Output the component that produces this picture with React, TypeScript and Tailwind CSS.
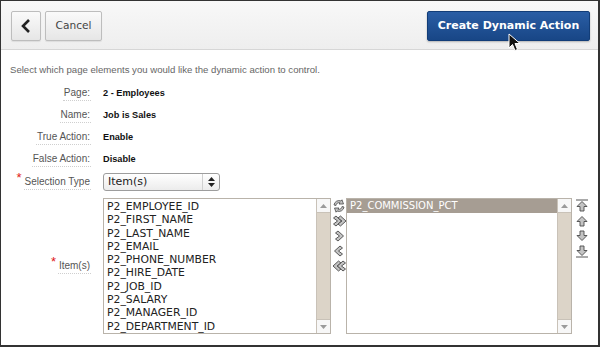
import React from 'react'

const leftItems = [
  'P2_EMPLOYEE_ID',
  'P2_FIRST_NAME',
  'P2_LAST_NAME',
  'P2_EMAIL',
  'P2_PHONE_NUMBER',
  'P2_HIRE_DATE',
  'P2_JOB_ID',
  'P2_SALARY',
  'P2_MANAGER_ID',
  'P2_DEPARTMENT_ID',
]

const details = [
  ['Page:', '2 - Employees'],
  ['Name:', 'Job is Sales'],
  ['True Action:', 'Enable'],
  ['False Action:', 'Disable'],
]

const Label = ({ children, required }: { children: React.ReactNode; required?: boolean }) => (
  <div className="w-[91px] shrink-0 flex justify-end pr-[1px]">
    <span className="relative border-b border-dotted border-[#cfcfcf] pb-[1px] px-[1px] text-[10px] leading-[13px] text-[#555]">
      {required && <span className="absolute -left-[7px] -top-[4px] text-[13px] text-[#e01818]">*</span>}
      {children}
    </span>
  </div>
)

const ScrollBar = () => (
  <div className="w-[14px] shrink-0 flex flex-col border-l border-[#c9c2b8] bg-[#dcd4c8]">
    <div className="h-[14px] bg-[#f7f7f7] border-b border-[#c9c2b8] flex items-center justify-center">
      <svg width="7" height="4" viewBox="0 0 7 4"><path d="M0 4 L3.5 0 L7 4 Z" fill="#9a9a9a" /></svg>
    </div>
    <div className="flex-1" />
    <div className="h-[14px] bg-[#f7f7f7] border-t border-[#c9c2b8] flex items-center justify-center">
      <svg width="7" height="4" viewBox="0 0 7 4"><path d="M0 0 L3.5 4 L7 0 Z" fill="#9a9a9a" /></svg>
    </div>
  </div>
)

const Chev = ({ dir, double }: { dir: 'l' | 'r'; double?: boolean }) => {
  const one = (x: number) =>
    dir === 'r'
      ? `M${x} 2 L${x + 5.5} 7 L${x} 12 L${x - 2.5} 10 L${x + 1.5} 7 L${x - 2.5} 4 Z`
      : `M${x + 5.5} 2 L${x} 7 L${x + 5.5} 12 L${x + 8} 10 L${x + 4} 7 L${x + 8} 4 Z`
  return (
    <svg width="14" height="14" viewBox="0 0 14 14">
      {double ? (
        <>
          <path d={one(dir === 'r' ? 4 : 1)} fill="#c4c4c4" stroke="#4a4a4a" strokeWidth="0.9" />
          <path d={one(dir === 'r' ? 8.5 : 5.5)} fill="#c4c4c4" stroke="#4a4a4a" strokeWidth="0.9" />
        </>
      ) : (
        <path d={one(dir === 'r' ? 6 : 2.5)} fill="#c4c4c4" stroke="#4a4a4a" strokeWidth="0.9" />
      )}
    </svg>
  )
}

const Reset = () => (
  <svg width="14" height="14" viewBox="0 0 14 14">
    <path d="M2 6 A5 5 0 0 1 9 2 L10 0.8 L11.5 5 L7 5 L8 3.8 A3 3 0 0 0 4 6.5 Z" fill="#c4c4c4" stroke="#4a4a4a" strokeWidth="0.8" />
    <path d="M12 8 A5 5 0 0 1 5 12 L4 13.2 L2.5 9 L7 9 L6 10.2 A3 3 0 0 0 10 7.5 Z" fill="#c4c4c4" stroke="#4a4a4a" strokeWidth="0.8" />
  </svg>
)

const Arrow = ({ dir, bar }: { dir: 'u' | 'd'; bar?: boolean }) => (
  <svg width="14" height="14" viewBox="0 0 14 14">
    {dir === 'u' ? (
      <>
        {bar && <line x1="1" y1="1" x2="13" y2="1" stroke="#555" strokeWidth="1" />}
        <path d="M7 2.5 L12 7.5 L9 7.5 L9 12 L5 12 L5 7.5 L2 7.5 Z" fill="#c4c4c4" stroke="#4a4a4a" strokeWidth="0.9" />
      </>
    ) : (
      <>
        <path d="M7 11.5 L12 6.5 L9 6.5 L9 2 L5 2 L5 6.5 L2 6.5 Z" fill="#c4c4c4" stroke="#4a4a4a" strokeWidth="0.9" />
        {bar && <line x1="1" y1="13" x2="13" y2="13" stroke="#555" strokeWidth="1" />}
      </>
    )}
  </svg>
)

export default function App() {
  return (
    <div
      className="w-[600px] h-[347px] border-t border-l border-r-2 border-b-2 border-[#333] bg-white flex flex-col overflow-hidden relative"
      style={{ fontFamily: '"Liberation Sans", Arial, sans-serif' }}
    >
      {/* toolbar */}
      <div className="h-[49px] shrink-0 flex items-center justify-between pl-[10px] pr-[8px] pt-[2px] bg-gradient-to-b from-[#f8f8f8] to-[#eeeeee] border-b border-[#d6d6d6]">
        <div className="flex gap-[4px]">
          <button className="w-[30px] h-[30px] rounded-[2px] border border-[#bdbdbd] bg-gradient-to-b from-[#fafafa] to-[#e6e6e6] flex items-center justify-center shadow-[0_1px_1px_rgba(0,0,0,0.08)]">
            <svg width="10" height="14" viewBox="0 0 10 14"><path d="M8 1 L2 7 L8 13" fill="none" stroke="#222" strokeWidth="2.6" /></svg>
          </button>
          <button
            className="w-[57px] h-[30px] rounded-[2px] border border-[#bdbdbd] bg-gradient-to-b from-[#fafafa] to-[#e6e6e6] text-[10.6px] text-[#444] shadow-[0_1px_1px_rgba(0,0,0,0.08)]"
            style={{ fontFamily: '"DejaVu Sans", sans-serif' }}
          >
            Cancel
          </button>
        </div>
        <button
          className="w-[163px] h-[30px] rounded-[2px] border border-[#123d78] bg-gradient-to-b from-[#2a5ea5] to-[#184686] text-white font-bold text-[11px] shadow-[0_1px_2px_rgba(0,0,0,0.25)]"
          style={{ fontFamily: '"DejaVu Sans", sans-serif' }}
        >
          Create Dynamic Action
        </button>
      </div>

      {/* cursor */}
      <svg className="absolute left-[507px] top-[32px]" width="14" height="20" viewBox="0 0 14 20">
        <path d="M1 1 L1 15 L4.5 11.5 L7 17.5 L9.5 16.5 L7 10.5 L12 10.5 Z" fill="#111" stroke="#fff" strokeWidth="1" />
      </svg>

      <div className="pl-[9px] pt-[13px] text-[9.6px] leading-[13px] text-[#666]">
        Select which page elements you would like the dynamic action to control.
      </div>

      <div className="flex flex-col gap-[9px] mt-[11px]">
        {details.map(([k, v]) => (
          <div key={k} className="flex items-center gap-[11px] h-[13px]">
            <Label>{k}</Label>
            <span className="text-[9.2px] font-bold text-[#111]">{v}</span>
          </div>
        ))}
      </div>

      <div className="flex items-center gap-[11px] mt-[7px]">
        <Label required>Selection Type</Label>
        <div
          className="w-[117px] h-[18px] rounded-[3px] border border-[#9d9d9d] bg-gradient-to-b from-white to-[#ececec] flex items-center text-[11px] text-[#222]"
          style={{ fontFamily: '"DejaVu Sans", sans-serif' }}
        >
          <span className="flex-1 pl-[4px]">Item(s)</span>
          <span className="w-[17px] h-full border-l border-[#d0d0d0] flex items-center justify-center">
            <svg width="7" height="10" viewBox="0 0 7 10">
              <path d="M0 4 L3.5 0 L7 4 Z M0 6 L3.5 10 L7 6 Z" fill="#222" />
            </svg>
          </span>
        </div>
      </div>

      <div className="flex items-center gap-[11px] mt-[7px]">
        <Label required>Item(s)</Label>
        <div className="flex items-start">
          <div className="w-[228px] h-[136px] border border-[#b9b3aa] flex">
            <div
              className="flex-1 pl-[3px] pt-[1px] text-[10.8px] leading-[13.3px] text-[#222]"
              style={{ fontFamily: '"DejaVu Sans", sans-serif' }}
            >
              {leftItems.map((i) => (
                <div key={i}>{i}</div>
              ))}
            </div>
            <ScrollBar />
          </div>
          <div className="w-[15px] flex flex-col items-center gap-[1px] pt-[1px]">
            <Reset />
            <Chev dir="r" double />
            <Chev dir="r" />
            <Chev dir="l" />
            <Chev dir="l" double />
          </div>
          <div className="w-[226px] h-[136px] border border-[#b9b3aa] flex">
            <div className="flex-1" style={{ fontFamily: '"DejaVu Sans", sans-serif' }}>
              <div className="h-[14px] bg-[#a69d93] text-white text-[10px] leading-[14px] pl-[3px]">
                P2_COMMISSION_PCT
              </div>
            </div>
            <ScrollBar />
          </div>
          <div className="w-[18px] flex flex-col items-center gap-[1px] pt-[1px] pl-[2px]">
            <Arrow dir="u" bar />
            <Arrow dir="u" />
            <Arrow dir="d" />
            <Arrow dir="d" bar />
          </div>
        </div>
      </div>
    </div>
  )
}
